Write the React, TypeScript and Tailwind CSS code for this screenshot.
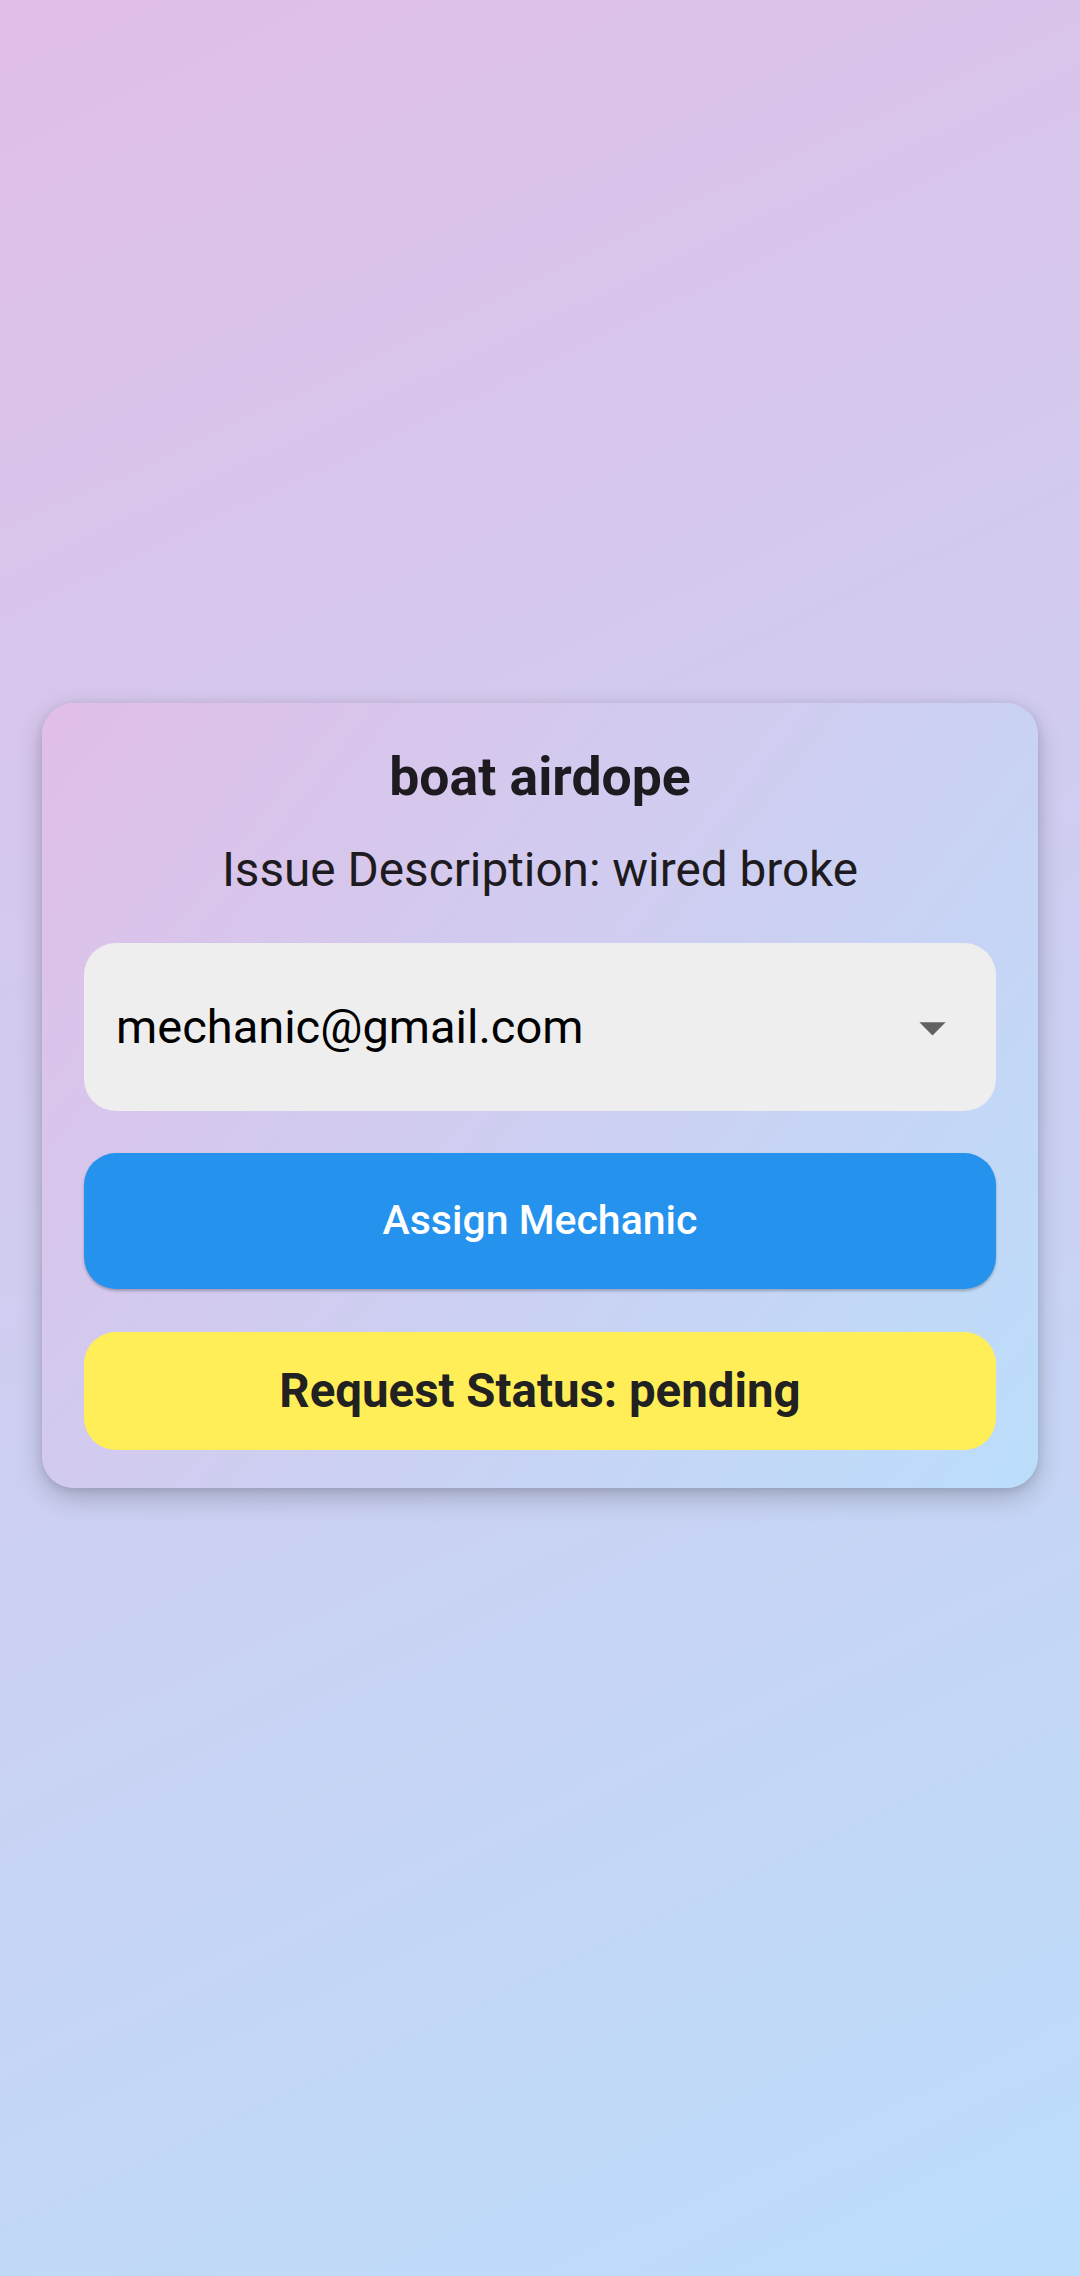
export default function App() {
  return (
    <main className="min-h-[2276px] w-full flex items-center justify-center px-[42px] pb-[85px] bg-[linear-gradient(154.6deg,#e1bee7,#bbdefb)] font-['Roboto',sans-serif]">
      <div className="w-full rounded-[32px] bg-[linear-gradient(128.2deg,#e1bee7,#bbdefb)] shadow-[0_10px_26px_rgba(0,0,0,0.2),0_2px_10px_rgba(0,0,0,0.1)] px-[42px] pt-[42px] pb-[38px] flex flex-col">
        <h1 className="text-center text-[53.5px] leading-[64px] font-bold text-[#1d1b20]">
          boat airdope
        </h1>
        <p className="mt-[33px] text-center text-[47.7px] leading-[56px] text-[#1d1b20]">
          Issue Description: wired broke
        </p>

        <div className="mt-[45px] h-[168px] rounded-[32px] bg-[#eeeeee] pl-[32px] pr-[32px] flex items-center justify-between">
          <span className="text-[47px] leading-[56px] text-black">mechanic@gmail.com</span>
          <svg width="63" height="63" viewBox="0 0 24 24" className="shrink-0">
            <path d="M7 10l5 5 5-5z" fill="#616161" />
          </svg>
        </div>

        <button
          type="button"
          className="mt-[42px] h-[136px] rounded-[32px] bg-[#2593ee] shadow-[0_2px_3px_rgba(0,0,0,0.25)] text-white text-[41px] font-medium flex items-center justify-center"
        >
          Assign Mechanic
        </button>

        <div className="mt-[43px] h-[118px] rounded-[32px] bg-[#ffee58] flex items-center justify-center">
          <span className="text-[47.4px] leading-[56px] font-bold text-[#212121]">
            Request Status: pending
          </span>
        </div>
      </div>
    </main>
  );
}
